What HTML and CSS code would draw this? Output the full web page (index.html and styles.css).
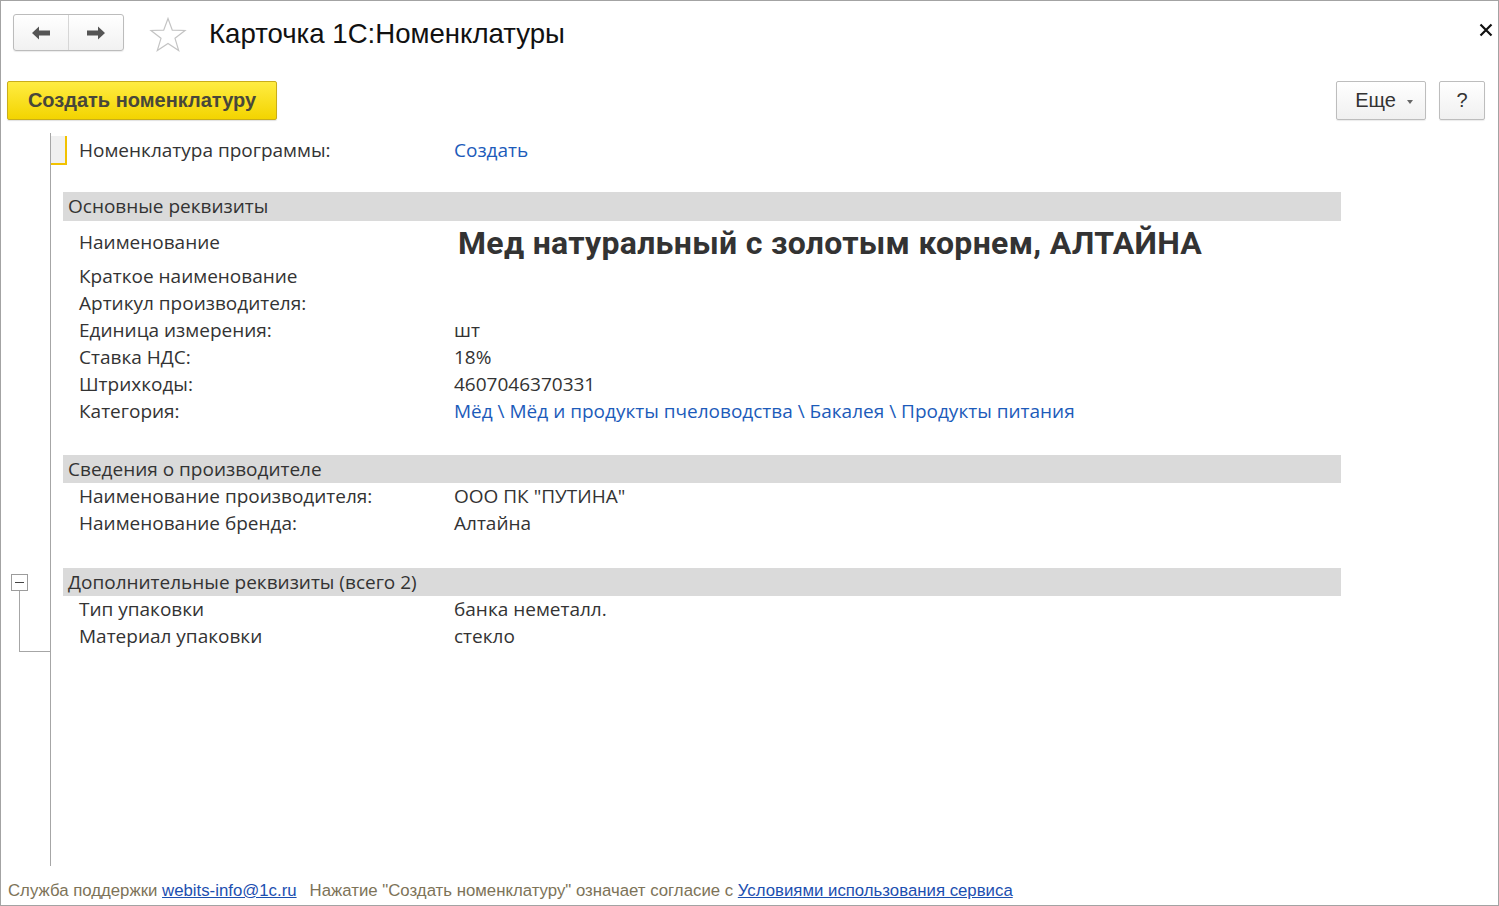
FILE: index.html
```html
<!DOCTYPE html>
<html lang="ru">
<head>
<meta charset="utf-8">
<title>Карточка 1С:Номенклатуры</title>
<link rel="stylesheet" href="styles.css">
</head>
<body>
<div class="window">
  <div class="titlebar">
    <div class="nav">
      <button class="nav-btn" aria-label="Назад">
        <svg width="20" height="16" viewBox="0 0 20 16"><path d="M1 8 L8 1.5 L8 5.5 L19 5.5 L19 10.5 L8 10.5 L8 14.5 Z" fill="#555"/></svg>
      </button>
      <button class="nav-btn" aria-label="Вперед">
        <svg width="20" height="16" viewBox="0 0 20 16"><path d="M19 8 L12 1.5 L12 5.5 L1 5.5 L1 10.5 L12 10.5 L12 14.5 Z" fill="#555"/></svg>
      </button>
    </div>
    <svg class="star" width="38" height="36" viewBox="0 0 38 36"><path d="M19 1.5 L23.3 13.2 L36 13.5 L26 21.3 L29.7 33.6 L19 26.4 L8.3 33.6 L12 21.3 L2 13.5 L14.7 13.2 Z" fill="none" stroke="#c4c4c4" stroke-width="1.2" stroke-linejoin="miter"/></svg>
    <h1 class="title">Карточка 1С:Номенклатуры</h1>
    <div class="spacer"></div>
    <svg class="close" width="14" height="14" viewBox="0 0 14 14"><path d="M1.5 1.5 L12.5 12.5 M12.5 1.5 L1.5 12.5" stroke="#111" stroke-width="2.2"/></svg>
  </div>

  <div class="cmdbar">
    <button class="btn-primary">Создать номенклатуру</button>
    <div class="spacer"></div>
    <button class="btn more">Еще <span class="caret"></span></button>
    <button class="btn help">?</button>
  </div>

  <div class="page">
    <div class="form">
      <div class="row row-top">
        <span class="marker"></span>
        <span class="label">Номенклатура программы:</span>
        <a class="value link" href="#">Создать</a>
      </div>

      <div class="section section-main">
        <div class="section-head">Основные реквизиты</div>
        <div class="row row-name">
          <span class="label">Наименование</span>
          <span class="value big">Мед натуральный с золотым корнем, АЛТАЙНА</span>
        </div>
        <div class="row"><span class="label">Краткое наименование</span><span class="value"></span></div>
        <div class="row"><span class="label">Артикул производителя:</span><span class="value"></span></div>
        <div class="row"><span class="label">Единица измерения:</span><span class="value">шт</span></div>
        <div class="row"><span class="label">Ставка НДС:</span><span class="value">18%</span></div>
        <div class="row"><span class="label">Штрихкоды:</span><span class="value">4607046370331</span></div>
        <div class="row"><span class="label">Категория:</span><span class="value link">Мёд \ Мёд и продукты пчеловодства \ Бакалея \ Продукты питания</span></div>
      </div>

      <div class="section section-maker">
        <div class="section-head">Сведения о производителе</div>
        <div class="row"><span class="label">Наименование производителя:</span><span class="value">ООО ПК "ПУТИНА"</span></div>
        <div class="row"><span class="label">Наименование бренда:</span><span class="value">Алтайна</span></div>
      </div>

      <div class="section section-extra">
        <span class="toggle"></span>
        <span class="tree-line"></span>
        <div class="section-head">Дополнительные реквизиты (всего 2)</div>
        <div class="row"><span class="label">Тип упаковки</span><span class="value">банка неметалл.</span></div>
        <div class="row"><span class="label">Материал упаковки</span><span class="value">стекло</span></div>
      </div>
    </div>
  </div>

  <div class="footer">
    Служба поддержки <a href="#">webits-info@1c.ru</a><span class="gap"></span>Нажатие "Создать номенклатуру" означает согласие с <a href="#">Условиями использования сервиса</a>
  </div>
</div>
</body>
</html>
```

FILE: styles.css
```css
* { box-sizing: border-box; }
html, body { margin: 0; padding: 0; background: #fff; }
body {
  font-family: "Open Sans", "Noto Sans", sans-serif;
  color: #333;
}
.window {
  width: 1499px;
  height: 906px;
  border: 1px solid #a3a3a3;
  display: flex;
  flex-direction: column;
  overflow: hidden;
}
.spacer { flex: 1; }

/* title bar */
.titlebar {
  height: 80px;
  display: flex;
  align-items: flex-start;
  padding: 13px 4px 0 12px;
}
.nav {
  display: flex;
  width: 111px;
  height: 37px;
  border: 1px solid #bcbcbc;
  border-radius: 3px;
  background: linear-gradient(#ffffff, #f1f1f1);
  box-shadow: 0 1px 1px rgba(0,0,0,0.08);
}
.nav-btn {
  flex: 1;
  border: 0;
  background: transparent;
  padding: 0;
  display: flex;
  align-items: center;
  justify-content: center;
}
.nav-btn + .nav-btn { border-left: 1px solid #d6d6d6; }
.star { margin: 3px 0 0 25px; }
.title {
  margin: 0 0 0 22px;
  font-family: "Liberation Sans", Arial, sans-serif;
  font-weight: normal;
  font-size: 27.6px;
  line-height: 40px;
  color: #111;
}
.close { margin-top: 9px; margin-right: 1px; }

/* command bar */
.cmdbar {
  height: 39px;
  display: flex;
  padding: 0 13px 0 6px;
}
.btn-primary {
  width: 270px;
  height: 39px;
  border: 1px solid #c9ad1a;
  border-radius: 2px;
  background: linear-gradient(#ffec42, #f3d400);
  font-family: "Liberation Sans", Arial, sans-serif;
  font-weight: bold;
  font-size: 20px;
  color: #48473a;
  padding: 0;
  box-shadow: 0 1px 1px rgba(0,0,0,0.12);
}
.btn {
  height: 39px;
  border: 1px solid #bdbdbd;
  border-radius: 2px;
  background: linear-gradient(#ffffff, #f0f0f0);
  font-family: "Liberation Sans", Arial, sans-serif;
  font-size: 20px;
  color: #333;
  padding: 0;
  box-shadow: 0 1px 1px rgba(0,0,0,0.08);
}
.more {
  width: 90px;
  display: flex;
  align-items: center;
  justify-content: center;
  gap: 11px;
  padding-left: 6px;
}
.caret {
  width: 0; height: 0;
  border-left: 3.5px solid transparent;
  border-right: 3.5px solid transparent;
  border-top: 4px solid #666;
  margin-top: 2px;
}
.help { width: 46px; margin-left: 13px; }

/* page */
.page {
  flex: 1;
  padding-left: 49px;
  padding-top: 13px;
}
.form {
  height: 733px;
  border-left: 1px solid #a6a6a6;
  padding: 3px 0 0 12px;
}
.row {
  display: flex;
  align-items: center;
  height: 27px;
  padding-left: 16px;
  font-size: 19px;
  line-height: 27px;
}
.label { width: 375px; flex: none; }
.value { white-space: nowrap; }
.link { color: #1c5bba; text-decoration: none; }

.row-top {
  height: 29px;
  margin-left: -12px;
  padding-left: 0;
}
.marker {
  width: 16px;
  height: 29px;
  background: #f0f0f0;
  border-right: 2px solid #f2c200;
  border-bottom: 2px solid #f2c200;
  margin-right: 12px;
}

.section { position: relative; width: 1278px; }
.section-main { margin-top: 27px; }
.section-maker { margin-top: 30px; }
.section-extra { margin-top: 31px; }
.section-head {
  height: 28px;
  background: #dadada;
  padding-left: 5px;
  font-size: 19px;
  line-height: 28px;
  color: #333;
}
.section-main .section-head { height: 29px; line-height: 29px; }

.row-name { height: 42px; }
.big {
  font-family: "Roboto", "Liberation Sans", sans-serif;
  font-weight: bold;
  font-size: 32px;
  letter-spacing: 0.3px;
  color: #333;
  margin-left: 4px;
  margin-top: 2px;
}

.toggle {
  position: absolute;
  left: -52px;
  top: 6px;
  width: 17px;
  height: 17px;
  border: 1px solid #9c9c9c;
  background: #fff;
  z-index: 1;
}
.toggle::after {
  content: "";
  position: absolute;
  left: 3px;
  right: 3px;
  top: 7px;
  height: 1px;
  background: #444;
}
.tree-line {
  position: absolute;
  left: -44px;
  top: 22px;
  width: 32px;
  height: 62px;
  border-left: 1px solid #a6a6a6;
  border-bottom: 1px solid #a6a6a6;
}

/* footer */
.footer {
  height: 39px;
  padding: 16px 0 0 7px;
  font-family: "Liberation Sans", Arial, sans-serif;
  font-size: 16.8px;
  line-height: 18px;
  color: #7d7358;
  white-space: nowrap;
}
.footer a { color: #1c4fb0; text-decoration: underline; }
.gap { display: inline-block; width: 13px; }
```
